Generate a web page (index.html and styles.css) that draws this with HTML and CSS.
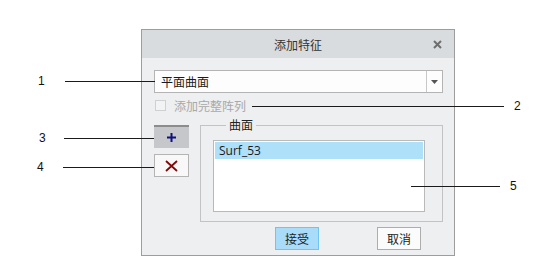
FILE: index.html
```html
<!DOCTYPE html>
<html lang="zh">

<head>
    <meta charset="UTF-8">
    <title>添加特征</title>
    <link rel="stylesheet" href="styles.css">
</head>

<body>
    <div class="canvas">
        <div class="dialog">
            <div class="title-bar">
                <span class="title">添加特征</span>
                <svg class="close" width="9" height="9" viewBox="0 0 9 9">
                    <path d="M1 1 L8 8 M8 1 L1 8" stroke="#6e6e6e" stroke-width="2" />
                </svg>
            </div>

            <div class="dialog-body">
                <div class="select">
                    <span class="select-text">平面曲面</span>
                    <span class="select-arrow">
                        <svg width="7" height="4" viewBox="0 0 7 4">
                            <path d="M0 0 L7 0 L3.5 4 Z" fill="#555" />
                        </svg>
                    </span>
                </div>

                <label class="check-row">
                    <span class="checkbox"></span>
                    <span class="check-text">添加完整阵列</span>
                </label>

                <div class="main-row">
                    <div class="tool-buttons">
                        <div class="tool-btn add-btn">
                            <svg width="9" height="9" viewBox="0 0 9 9">
                                <path d="M4.5 0 V9 M0 4.5 H9" stroke="#101080" stroke-width="2" />
                            </svg>
                        </div>
                        <div class="tool-btn remove-btn">
                            <svg width="13" height="12" viewBox="0 0 13 12">
                                <path d="M1 1 L12 11 M12 1 L1 11" stroke="#800808" stroke-width="1.8" />
                            </svg>
                        </div>
                    </div>

                    <fieldset class="group">
                        <legend>曲面</legend>
                        <div class="list">
                            <div class="list-item selected">Surf_53</div>
                        </div>
                    </fieldset>
                </div>

                <div class="footer">
                    <button class="btn primary">接受</button>
                    <button class="btn">取消</button>
                </div>
            </div>
        </div>

        <!-- callouts -->
        <div class="callout c1"><span class="num">1</span><span class="line"></span></div>
        <div class="callout c3"><span class="num">3</span><span class="line"></span></div>
        <div class="callout c4"><span class="num">4</span><span class="line"></span></div>
        <div class="callout c2"><span class="line"></span><span class="num">2</span></div>
        <div class="callout c5"><span class="line"></span><span class="num">5</span></div>
    </div>
</body>

</html>
```

FILE: styles.css
```css
body {
    margin: 0;
    background: #ffffff;
    font-family: "Noto Sans CJK SC", "Noto Sans", sans-serif;
    font-size: 12px;
    color: #222;
}

.canvas {
    position: relative;
    width: 560px;
    height: 272px;
    padding-top: 29px;
    box-sizing: border-box;
}

.dialog {
    margin-left: 141px;
    width: 314px;
    height: 227px;
    box-sizing: border-box;
    border: 1px solid #9d9d9d;
    background: #eeeff1;
    display: flex;
    flex-direction: column;
}

.title-bar {
    height: 28px;
    background: #d9dcdf;
    display: flex;
    align-items: center;
    justify-content: center;
    position: relative;
}

.title {
    color: #333;
    font-size: 12px;
}

.close {
    position: absolute;
    right: 12px;
    top: 10px;
}

.dialog-body {
    padding: 12px 11px 0 12px;
    display: flex;
    flex-direction: column;
}

.select {
    height: 23px;
    box-sizing: border-box;
    border: 1px solid #b4b4b4;
    background: #fdfdfd;
    display: flex;
    align-items: center;
}

.select-text {
    flex: 1;
    padding-left: 6px;
    color: #1a1a1a;
}

.select-arrow {
    width: 15px;
    height: 100%;
    border-left: 1px solid #c8c8c8;
    display: flex;
    align-items: center;
    justify-content: center;
}

.check-row {
    display: flex;
    align-items: center;
    height: 18px;
    margin-top: 3px;
}

.checkbox {
    width: 11px;
    height: 11px;
    box-sizing: border-box;
    border: 1px solid #cfd0d2;
    background: #f2f3f4;
    margin-left: 1px;
}

.check-text {
    margin-left: 8px;
    color: #a8a8a8;
}

.main-row {
    display: flex;
    align-items: flex-start;
    margin-top: 11px;
}

.tool-buttons {
    width: 35px;
    display: flex;
    flex-direction: column;
    gap: 6px;
}

.tool-btn {
    height: 23px;
    box-sizing: border-box;
    display: flex;
    align-items: center;
    justify-content: center;
}

.add-btn {
    background: #c6c7cb;
    border-top: 2px solid #8c8c8c;
}

.remove-btn {
    background: #f8f8f8;
    border: 1px solid #b4b4b4;
}

.group {
    margin: -7px 0 0 11px;
    padding: 0 17px 0 12px;
    width: 243px;
    height: 104px;
    box-sizing: border-box;
    border: 1px solid #c3c3c3;
}

.group legend {
    padding: 0 3px;
    margin-left: 13px;
    color: #222;
    line-height: 14px;
}

.list {
    margin-top: 8px;
    height: 72px;
    box-sizing: border-box;
    border: 1px solid #b9b9b9;
    background: #ffffff;
    padding: 1px;
}

.list-item {
    height: 17px;
    line-height: 17px;
    padding-left: 4px;
    font-family: "Open Sans", "Noto Sans", sans-serif;
    font-size: 12px;
    color: #1a1a1a;
}

.list-item.selected {
    background: #aee0fa;
}

.footer {
    display: flex;
    margin-top: 5px;
    padding-left: 121px;
    gap: 58px;
}

.btn {
    width: 44px;
    height: 23px;
    box-sizing: border-box;
    border: 1px solid #adadad;
    background: #fbfbfb;
    font-family: "Noto Sans CJK SC", sans-serif;
    font-size: 12px;
    color: #222;
    padding: 0;
}

.btn.primary {
    background: #a9dcf8;
    border-color: #6ec5f1;
}

/* callout annotations over the figure */
.callout {
    position: absolute;
    display: flex;
    align-items: center;
    height: 14px;
    font-family: "Liberation Sans", sans-serif;
    font-size: 12px;
    color: #111;
}

.callout .line {
    height: 1px;
    background: #1a1a1a;
}

.c1 { left: 38px; top: 74px; }
.c1 .num { width: 27px; }
.c1 .line { width: 90px; }

.c3 { left: 39px; top: 131px; }
.c3 .num { width: 25px; }
.c3 .line { width: 90px; }

.c4 { left: 37px; top: 160px; }
.c4 .num { width: 26px; }
.c4 .line { width: 91px; }

.c2 { left: 252px; top: 99px; }
.c2 .line { width: 252px; margin-right: 10px; }

.c5 { left: 411px; top: 179px; }
.c5 .line { width: 89px; margin-right: 10px; }
```
